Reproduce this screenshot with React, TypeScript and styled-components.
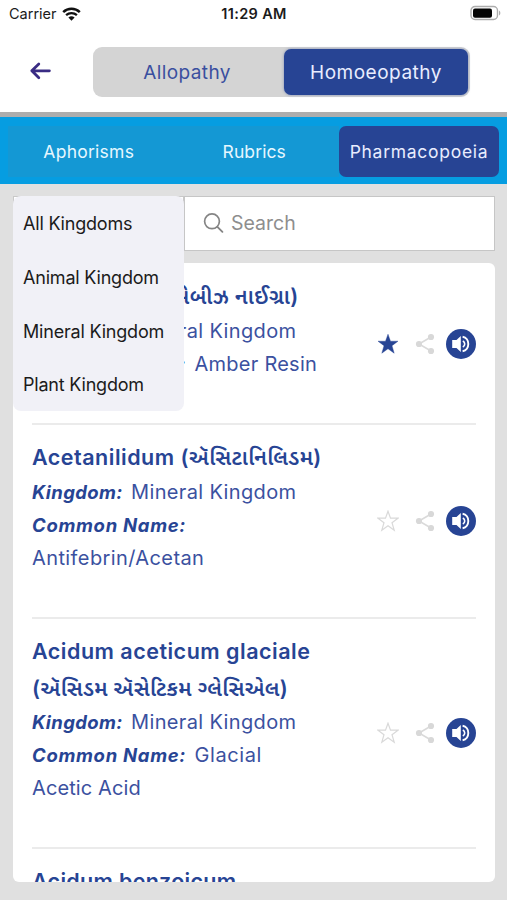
import React from 'react';
import styled, { createGlobalStyle } from 'styled-components';

const navy = '#274494';
const geometric = `Inter, "Noto Sans Gujarati", "Noto Sans", sans-serif`;

const GlobalStyle = createGlobalStyle`
  * { box-sizing: border-box; }
  body { margin: 0; background: #e0e0e0; font-family: ${geometric}; }
`;

const Screen = styled.div`
  width: 507px;
  height: 900px;
  overflow: hidden;
  display: flex;
  flex-direction: column;
  background: #e0e0e0;
`;

const StatusBar = styled.div`
  height: 28px;
  flex: none;
  display: grid;
  grid-template-columns: 1fr auto 1fr;
  align-items: center;
  padding: 0 6px 0 9px;
  background: #fff;
  color: #1b1b1b;
`;

const Carrier = styled.div`
  display: flex;
  align-items: center;
  gap: 5px;
  padding-bottom: 1px;
  font-size: 14.5px;
`;

const Clock = styled.div`
  margin-right: 2px;
  padding-bottom: 1px;
  font-size: 14.5px;
  font-weight: 600;
  letter-spacing: 0.35px;
`;

const Battery = styled.svg`
  justify-self: end;
  display: block;
  margin-bottom: 2px;
`;

const Header = styled.header`
  height: 84px;
  flex: none;
  display: flex;
  align-items: flex-start;
  padding: 19px 37px 0 29px;
  background: #fff;
`;

const BackArrow = styled.svg`
  display: block;
  margin: 13px 41px 0 0;
`;

const Segmented = styled.div`
  display: flex;
  flex: 1;
  height: 50px;
  padding: 2px 2px 2px 0;
  border-radius: 9px;
  background: #d4d4d4;
`;

const Segment = styled.div<{ $active?: boolean; $spacing: number }>`
  flex: ${(p) => (p.$active ? 'none' : 1)};
  width: ${(p) => (p.$active ? '184px' : 'auto')};
  display: flex;
  align-items: center;
  justify-content: center;
  border-radius: 7px;
  font-size: 19px;
  padding-right: ${(p) => (p.$active ? '0' : '3px')};
  letter-spacing: ${(p) => p.$spacing}px;
  color: ${(p) => (p.$active ? '#e9edff' : '#3a4f9f')};
  background: ${(p) => (p.$active ? navy : 'transparent')};
  box-shadow: ${(p) => (p.$active ? '0 0 3px rgba(39, 68, 148, 0.5)' : 'none')};
`;

const TabBar = styled.nav`
  height: 72px;
  flex: none;
  display: flex;
  padding: 9px 8px 7px;
  border-top: 5px solid #adadad;
  background: #069de1;
`;

const Tab = styled.div<{ $width: number; $active?: boolean; $spacing: number }>`
  width: ${(p) => p.$width}px;
  height: 51px;
  display: flex;
  align-items: center;
  justify-content: center;
  border-radius: ${(p) => (p.$active ? '7px' : '0')};
  font-size: 17.5px;
  letter-spacing: ${(p) => p.$spacing}px;
  color: ${(p) => (p.$active ? '#e9edff' : '#e6f7ff')};
  background: ${(p) => (p.$active ? navy : '#1498d4')};
`;

const Content = styled.main`
  flex: 1;
  min-height: 0;
  display: flex;
  flex-direction: column;
  padding: 12px 12px 18px 13px;
`;

const FilterRow = styled.div`
  position: relative;
  flex: none;
  height: 55px;
  display: flex;
  margin-bottom: 12px;
`;

const KingdomSelect = styled.div`
  width: 171px;
  border: 1px solid #c8c8c8;
  background: #fff;
`;

const SearchBox = styled.div`
  flex: 1;
  display: flex;
  align-items: center;
  gap: 7px;
  padding: 0 0 2px 18px;
  border: 1px solid #c6c6c6;
  background: #fff;
  color: #8e8e8e;
  font-size: 19.5px;
`;

const KingdomMenu = styled.div`
  position: absolute;
  z-index: 2;
  left: 0;
  top: 0;
  width: 171px;
  height: 215px;
  padding-top: 1px;
  border-radius: 8px;
  background: #f1f1f7;
  color: #1b1b1b;
`;

const KingdomOption = styled.div`
  height: 53.7px;
  display: flex;
  align-items: center;
  padding-left: 10px;
  font-size: 18px;
  letter-spacing: -0.2px;
  white-space: nowrap;
`;

const Card = styled.section`
  flex: 1;
  min-height: 0;
  overflow: hidden;
  padding: 0 19px;
  border-radius: 6px;
  background: #fff;
`;

const Remedy = styled.article<{ $height: number; $top: number }>`
  height: ${(p) => p.$height}px;
  display: flex;
  justify-content: space-between;
  padding-top: ${(p) => p.$top}px;
  border-bottom: 2px solid #ebebeb;
  color: ${navy};
`;

const RemedyText = styled.div`
  width: 330px;
  white-space: nowrap;
`;

const TitleLine = styled.div<{ $spacing?: number }>`
  height: 36.6px;
  line-height: 36px;
  font-size: 21.5px;
  font-weight: 600;
  letter-spacing: ${(p) => p.$spacing ?? 0.5}px;
`;

const Gujarati = styled.span<{ $spacing: number }>`
  letter-spacing: ${(p) => p.$spacing}px;
`;

const DetailLine = styled.div`
  height: 33px;
  display: flex;
  align-items: baseline;
  line-height: 33px;
  font-size: 20px;
`;

const Label = styled.span<{ $width: number; $spacing: number }>`
  flex: none;
  width: ${(p) => p.$width}px;
  font-size: 18.5px;
  font-weight: 700;
  font-style: italic;
  letter-spacing: ${(p) => p.$spacing}px;
`;

const Value = styled.span<{ $spacing: number }>`
  color: #3b51a0;
  letter-spacing: ${(p) => p.$spacing}px;
`;

const Actions = styled.div<{ $top: number }>`
  height: 32px;
  display: flex;
  align-items: center;
  margin-top: ${(p) => p.$top}px;
`;

const StarIcon = styled.svg`
  display: block;
  margin-right: 16px;
`;

const ShareIcon = styled.svg`
  display: block;
  margin-right: 11.5px;
`;

const SpeakerIcon = styled.svg`
  display: block;
`;

function RemedyActions({ top, starred }: { top: number; starred?: boolean }) {
  return (
    <Actions $top={top}>
      <StarIcon width="22" height="22" viewBox="0 0 22 22">
        <path
          d="M11 1.2 13.5 8.2H21L15 12.7 17.2 20.2 11 15.8 4.8 20.2 7 12.7 1 8.2H8.5Z"
          fill={starred ? navy : 'none'}
          stroke={starred ? navy : '#d9d9d9'}
          strokeWidth={starred ? 0.4 : 1.2}
        />
      </StarIcon>
      <ShareIcon width="20" height="22" viewBox="0 0 20 22">
        <path d="M16 4 4 11l12 7" fill="none" stroke="#dadada" strokeWidth="1.6" />
        <circle cx="16" cy="4" r="3.1" fill="#d8d8d8" />
        <circle cx="4" cy="11" r="3.1" fill="#d8d8d8" />
        <circle cx="16" cy="18" r="3.1" fill="#d8d8d8" />
      </ShareIcon>
      <SpeakerIcon width="30" height="32" viewBox="0 0 30 32">
        <circle cx="15" cy="16" r="15" fill={navy} />
        <path d="M6.2 12h4.3l4.3-4v16l-4.3-4H6.2Z" fill="#fff" />
        <path d="M16.8 13a3.3 3.3 0 0 1 0 6" fill="none" stroke="#fff" strokeWidth="1.6" />
        <path d="M16.6 8.8c7.6 1.2 7.6 13.2 0 14.4" fill="none" stroke="#fff" strokeWidth="1.9" />
      </SpeakerIcon>
    </Actions>
  );
}

function Detail({ label, value, spacing = 0 }: { label: string; value?: string; spacing?: number }) {
  const kingdom = label === 'Kingdom:';
  return (
    <DetailLine>
      <Label $width={kingdom ? 99 : 162.5} $spacing={kingdom ? 0.4 : 0.7}>{label}</Label>
      {value && <Value $spacing={spacing}>{value}</Value>}
    </DetailLine>
  );
}

export default function App() {
  return (
    <>
      <GlobalStyle />
      <Screen>
        <StatusBar>
          <Carrier>
            Carrier
            <svg width="19" height="14" viewBox="0 0 19 14">
              <path d="M1.2 5.2a12 12 0 0 1 16.6 0" fill="none" stroke="#111" strokeWidth="2.5" />
              <path d="M4.1 8.2a8 8 0 0 1 10.8 0" fill="none" stroke="#111" strokeWidth="2.3" />
              <path d="M6.4 10.5a4.7 4.7 0 0 1 6.2 0L9.5 13.7Z" fill="#111" />
            </svg>
          </Carrier>
          <Clock>11:29 AM</Clock>
          <Battery width="31" height="16" viewBox="0 0 31 16">
            <rect x="1" y="1.5" width="26.5" height="13" rx="4" fill="#fff" stroke="#adadad" strokeWidth="1.4" />
            <rect x="3" y="3.4" width="19" height="9.4" rx="2" fill="#050505" />
            <path d="M29 5.5c1.8.8 1.8 4.2 0 5Z" fill="#adadad" />
          </Battery>
        </StatusBar>
        <Header>
          <BackArrow width="23" height="22" viewBox="0 0 23 22">
            <path d="M20.4 10.8H2.8M9.8 4 2.8 10.8l7 7" fill="none" stroke="#3a2c84" strokeWidth="2.8" strokeLinecap="round" strokeLinejoin="round" />
          </BackArrow>
          <Segmented>
            <Segment $spacing={0.4}>Allopathy</Segment>
            <Segment $active $spacing={0.5}>Homoeopathy</Segment>
          </Segmented>
        </Header>
        <TabBar>
          <Tab $width={161.5} $spacing={0.25}>Aphorisms</Tab>
          <Tab $width={169.5} $spacing={0.1}>Rubrics</Tab>
          <Tab $width={160} $active $spacing={0.72}>Pharmacopoeia</Tab>
        </TabBar>
        <Content>
          <FilterRow>
            <KingdomSelect />
            <SearchBox>
              <svg width="21" height="22" viewBox="0 0 21 22">
                <circle cx="9" cy="9.3" r="7.4" fill="none" stroke="#858585" strokeWidth="1.7" />
                <path d="m14.4 14.8 5 5" stroke="#858585" strokeWidth="1.9" strokeLinecap="round" />
              </svg>
              Search
            </SearchBox>
            <KingdomMenu>
              <KingdomOption>All Kingdoms</KingdomOption>
              <KingdomOption>Animal Kingdom</KingdomOption>
              <KingdomOption>Mineral Kingdom</KingdomOption>
              <KingdomOption>Plant Kingdom</KingdomOption>
            </KingdomMenu>
          </FilterRow>
          <Card>
            <Remedy $height={162} $top={15}>
              <RemedyText>
                <TitleLine>
                  Abies nigra (<Gujarati $spacing={0.5}>એબીઝ નાઈગ્રા)</Gujarati>
                </TitleLine>
                <Detail label="Kingdom:" value="Mineral Kingdom" spacing={0.36} />
                <Detail label="Common Name:" value="Amber Resin" spacing={0.25} />
              </RemedyText>
              <RemedyActions top={50} starred />
            </Remedy>
            <Remedy $height={194} $top={14}>
              <RemedyText>
                <TitleLine>
                  Acetanilidum (<Gujarati $spacing={0.4}>ઍસિટાનિલિડમ)</Gujarati>
                </TitleLine>
                <Detail label="Kingdom:" value="Mineral Kingdom" spacing={0.36} />
                <Detail label="Common Name:" />
                <DetailLine><Value $spacing={0.4}>Antifebrin/Acetan</Value></DetailLine>
              </RemedyText>
              <RemedyActions top={66} />
            </Remedy>
            <Remedy $height={230} $top={14}>
              <RemedyText>
                <TitleLine>Acidum aceticum glaciale</TitleLine>
                <TitleLine>
                  (<Gujarati $spacing={0.35}>ઍસિડમ ઍસેટિકમ ગ્લેસિએલ)</Gujarati>
                </TitleLine>
                <Detail label="Kingdom:" value="Mineral Kingdom" spacing={0.36} />
                <Detail label="Common Name:" value="Glacial" spacing={0.6} />
                <DetailLine><Value $spacing={0.1}>Acetic Acid</Value></DetailLine>
              </RemedyText>
              <RemedyActions top={84} />
            </Remedy>
            <Remedy $height={194} $top={14}>
              <RemedyText>
                <TitleLine $spacing={0.3}>Acidum benzoicum</TitleLine>
              </RemedyText>
            </Remedy>
          </Card>
        </Content>
      </Screen>
    </>
  );
}
